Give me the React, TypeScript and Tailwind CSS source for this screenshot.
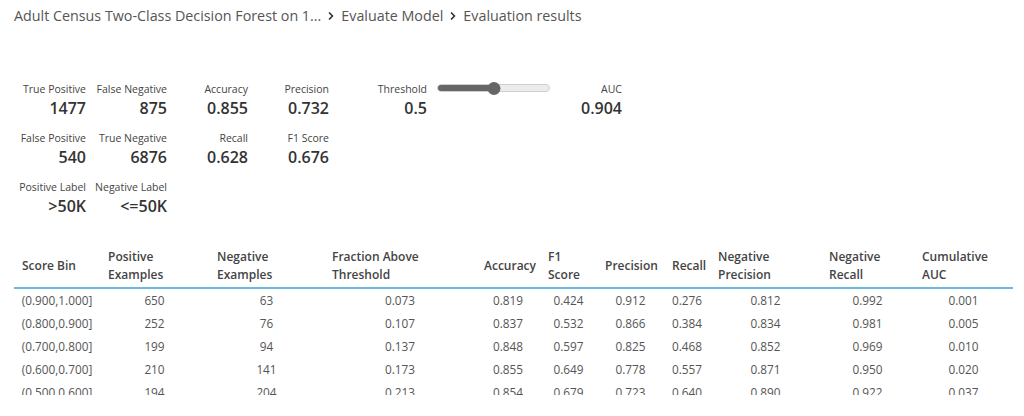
import { ChevronRight } from "lucide-react";

type Metric = { label: string; value: string };

const metricColumns: Metric[][] = [
  [
    { label: "True Positive", value: "1477" },
    { label: "False Positive", value: "540" },
    { label: "Positive Label", value: ">50K" },
  ],
  [
    { label: "False Negative", value: "875" },
    { label: "True Negative", value: "6876" },
    { label: "Negative Label", value: "<=50K" },
  ],
  [
    { label: "Accuracy", value: "0.855" },
    { label: "Recall", value: "0.628" },
  ],
  [
    { label: "Precision", value: "0.732" },
    { label: "F1 Score", value: "0.676" },
  ],
];

const columns = [
  { title: ["Score Bin"], width: "w-[86px]" },
  { title: ["Positive", "Examples"], width: "w-[109px]" },
  { title: ["Negative", "Examples"], width: "w-[115px]" },
  { title: ["Fraction Above", "Threshold"], width: "w-[152px]" },
  { title: ["Accuracy"], width: "w-[64px]" },
  { title: ["F1", "Score"], width: "w-[57px]" },
  { title: ["Precision"], width: "w-[67px]" },
  { title: ["Recall"], width: "w-[46px]" },
  { title: ["Negative", "Precision"], width: "w-[111px]" },
  { title: ["Negative", "Recall"], width: "w-[93px]" },
  { title: ["Cumulative", "AUC"], width: "w-[99px]" },
];

const rows = [
  ["(0.900,1.000]", "650", "63", "0.073", "0.819", "0.424", "0.912", "0.276", "0.812", "0.992", "0.001"],
  ["(0.800,0.900]", "252", "76", "0.107", "0.837", "0.532", "0.866", "0.384", "0.834", "0.981", "0.005"],
  ["(0.700,0.800]", "199", "94", "0.137", "0.848", "0.597", "0.825", "0.468", "0.852", "0.969", "0.010"],
  ["(0.600,0.700]", "210", "141", "0.173", "0.855", "0.649", "0.778", "0.557", "0.871", "0.950", "0.020"],
  ["(0.500,0.600]", "194", "204", "0.213", "0.854", "0.679", "0.723", "0.640", "0.890", "0.922", "0.037"],
];

function MetricCell({ label, value }: Metric) {
  return (
    <div className="flex flex-col items-end">
      <div className="text-[10.5px] leading-[14px] text-[#444]">{label}</div>
      <div className="text-[16px] leading-[24px] font-semibold text-[#333]">{value}</div>
    </div>
  );
}

function ThresholdSlider({ value }: { value: number }) {
  return (
    <div className="relative w-[113px] h-[12px] mt-[-1px] flex items-center">
      <div className="w-full h-[8px] rounded-full bg-[#ececec] border border-[#d0d0d0] overflow-hidden">
        <div className="h-full bg-[#666]" style={{ width: `${value * 100}%` }} />
      </div>
      <div
        className="absolute top-0 w-[13px] h-[13px] rounded-full bg-[#666] -translate-x-1/2"
        style={{ left: `${value * 100}%` }}
      />
    </div>
  );
}

export default function App() {
  return (
    <div className="w-[1024px] h-[416px] overflow-hidden bg-white font-['Open_Sans',sans-serif]">
      {/* Breadcrumb */}
      <div className="flex items-center h-[32px] pl-[14px] text-[14.3px] text-[#555]">
        <span>Adult Census Two-Class Decision Forest on 1...</span>
        <ChevronRight className="w-[12px] h-[12px] mx-[4px] text-[#333]" strokeWidth={3.5} />
        <span>Evaluate Model</span>
        <ChevronRight className="w-[12px] h-[12px] mx-[4px] text-[#333]" strokeWidth={3.5} />
        <span>Evaluation results</span>
      </div>

      {/* Summary metrics */}
      <div className="flex items-start mt-[50px] ml-[5px]">
        {metricColumns.map((col, i) => (
          <div key={i} className="w-[81px] flex flex-col gap-[11px]">
            {col.map((m) => (
              <MetricCell key={m.label} {...m} />
            ))}
          </div>
        ))}
        <div className="w-[98px]">
          <MetricCell label="Threshold" value="0.5" />
        </div>
        <div className="ml-[10px] pt-[1px]">
          <ThresholdSlider value={0.5} />
        </div>
        <div className="w-[72px]">
          <MetricCell label="AUC" value="0.904" />
        </div>
      </div>

      {/* Score bin table, cut off by the panel's lower edge */}
      <div className="mt-[30px] ml-[14px] w-[999px] h-[147px] overflow-hidden">
        <div className="flex items-center border-b-2 border-[#6bb9de] pb-[3px]">
          {columns.map((c) => (
            <div
              key={c.title.join(" ")}
              className={`${c.width} pl-[8px] text-[12px] leading-[18px] font-semibold text-[#444]`}
            >
              {c.title.map((t) => (
                <div key={t}>{t}</div>
              ))}
            </div>
          ))}
        </div>
        {rows.map((r) => (
          <div key={r[0]} className="flex h-[23px] items-center">
            {r.map((v, j) => (
              <div key={j} className={`${columns[j].width} text-center text-[11.8px] text-[#555]`}>
                {v}
              </div>
            ))}
          </div>
        ))}
      </div>
    </div>
  );
}
